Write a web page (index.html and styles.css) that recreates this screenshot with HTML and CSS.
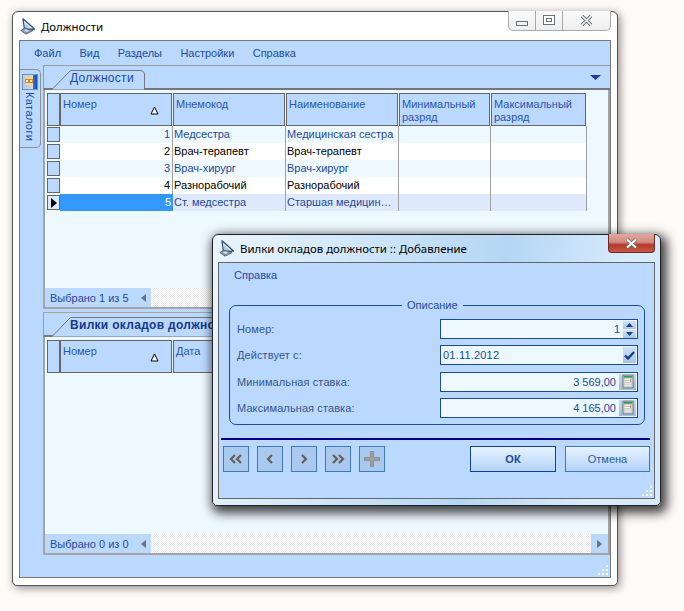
FILE: index.html
```html
<!DOCTYPE html>
<html lang="ru">
<head>
<meta charset="utf-8">
<title>Должности</title>
<link rel="stylesheet" href="styles.css">
</head>
<body>
<svg class="defs" width="0" height="0">
  <defs>
    <symbol id="ship" viewBox="0 0 16 17">
      <path d="M3 .8 L14.500 11 L4.500 11.500 Z" fill="#f4f8fd" stroke="#2a4f8f" stroke-width="1.300" stroke-linejoin="round"/>
      <path d="M4.500 4.500 L10 10 L5.300 10.300 Z" fill="#a9c9ea"/>
      <path d="M.8 12.500 L5 10 L13 12.500 L6 16.200 Z" fill="#8793a6" stroke="#4f5d75" stroke-width=".8"/>
      <path d="M3.500 12.500 L6 11.500 L9.500 12.800 L6.500 14 Z" fill="#d6dde8"/>
    </symbol>
    <symbol id="sort" viewBox="0 0 9 9">
      <path d="M4.500 1 L8 8 H1 Z" fill="#fff" stroke="#000" stroke-width="1"/>
    </symbol>
    <symbol id="calc" viewBox="0 0 14 17">
      <rect x="1" y="1" width="12" height="15" fill="#c8c8c4" stroke="#6d7a75"/>
      <rect x="2" y="2" width="10" height="2" fill="#2f9b55"/>
      <path d="M3 6h8M3 8.500h8M3 11h8M3 13.500h8" stroke="#f4f4f0" stroke-width="1.200"/>
      <path d="M10 6v3" stroke="#e08a6a" stroke-width="1.500"/>
    </symbol>
  </defs>
</svg>

<section class="window main-window">
  <header class="titlebar">
    <svg class="title-icon"><use href="#ship"/></svg>
    <span class="title-text">Должности</span>
    <div class="controls">
      <span class="ctl ctl-min"><i class="glyph-min"></i></span>
      <span class="ctl ctl-max"><i class="glyph-max"></i></span>
      <span class="ctl ctl-close">
        <svg width="13" height="11" viewBox="0 0 13 11"><path d="M2 1 L11 10 M11 1 L2 10" stroke="#5f6a72" stroke-width="3.400"/><path d="M2 1 L11 10 M11 1 L2 10" stroke="#f4f6f8" stroke-width="1.700"/></svg>
      </span>
    </div>
  </header>
  <div class="client">
    <nav class="menu">
      <span>Файл</span><span>Вид</span><span>Разделы</span><span>Настройки</span><span>Справка</span>
    </nav>
    <div class="work">
      <aside class="sidebar">
        <div class="side-tab">
          <svg class="side-icon" viewBox="0 0 16 16">
            <defs><linearGradient id="sg" x1="0" x2="1" y1="0" y2="0"><stop offset="0" stop-color="#a9c8ee"/><stop offset=".68" stop-color="#c9dcf4"/><stop offset=".72" stop-color="#2a76d8"/><stop offset="1" stop-color="#0c46b4"/></linearGradient></defs>
            <rect x=".5" y=".5" width="15" height="15" fill="url(#sg)" stroke="#7890ae"/>
            <rect x="3" y="3" width="8" height="8" fill="#f6d58a"/>
            <rect x="3.500" y="5.500" width="3" height="3" fill="#fff2d0" stroke="#e8801e"/>
            <rect x="7.500" y="5.500" width="3" height="3" fill="#fff2d0" stroke="#e8801e"/>
          </svg>
          <span class="side-text">Каталоги</span>
        </div>
      </aside>
      <div class="panels">
        <section class="panel panel-top">
          <div class="tabbar tabbar-top">
            <div class="tab">
              <svg class="tab-shape" width="96" height="20" viewBox="0 0 96 20"><path d="M0 19.500 H2 L20 1 Q20.500 .5 22 .5 H90 Q94.500 .5 94.500 5 V20 H0 Z" fill="#bbd9fe" stroke="#777" stroke-width="1"/></svg>
              <span class="tab-label">Должности</span>
            </div>
            <svg class="tab-menu" width="11" height="5" viewBox="0 0 11 5"><path d="M0 0H11L5.500 5Z" fill="#1b3f8f"/></svg>
          </div>
          <div class="pane">
            <div class="table">
              <div class="hcell hcell-ind"></div>
              <div class="hcell">Номер<svg class="sort"><use href="#sort"/></svg></div>
              <div class="hcell">Мнемокод</div>
              <div class="hcell">Наименование</div>
              <div class="hcell">Минимальный разряд</div>
              <div class="hcell">Максимальный разряд</div>

              <div class="ind-wrap"><i class="ind"></i></div><div class="cell num odd">1</div><div class="cell odd">Медсестра</div><div class="cell odd">Медицинская сестра</div><div class="cell odd"></div><div class="cell odd"></div>
              <div class="ind-wrap"><i class="ind"></i></div><div class="cell num even">2</div><div class="cell even">Врач-терапевт</div><div class="cell even">Врач-терапевт</div><div class="cell even"></div><div class="cell even"></div>
              <div class="ind-wrap"><i class="ind"></i></div><div class="cell num odd">3</div><div class="cell odd">Врач-хирург</div><div class="cell odd">Врач-хирург</div><div class="cell odd"></div><div class="cell odd"></div>
              <div class="ind-wrap"><i class="ind"></i></div><div class="cell num even">4</div><div class="cell even">Разнорабочий</div><div class="cell even">Разнорабочий</div><div class="cell even"></div><div class="cell even"></div>
              <div class="ind-wrap"><i class="ind ind-cur"><svg width="6" height="10" viewBox="0 0 6 10"><path d="M0 0L6 5L0 10Z" fill="#000"/></svg></i></div><div class="cell num cur">5</div><div class="cell sel">Ст. медсестра</div><div class="cell sel">Старшая медицин…</div><div class="cell sel"></div><div class="cell sel"></div>
            </div>
            <footer class="status">
              <div class="status-text">Выбрано 1 из 5<i class="arrow-left"></i></div>
              <div class="dither"></div>
            </footer>
          </div>
        </section>
        <div class="splitter"></div>
        <section class="panel panel-bottom">
          <div class="tabbar tabbar-low">
            <div class="tab tab-wide">
              <svg class="tab-shape" width="200" height="20" viewBox="0 0 200 20"><path d="M0 19.500 H2 L20 1 Q20.500 .5 22 .5 H200 V20 H0 Z" fill="#bbd9fe" stroke="#777" stroke-width="1"/></svg>
              <span class="tab-label tab-bold">Вилки окладов должности</span>
            </div>
          </div>
          <div class="pane pane-low">
            <div class="table table-low">
              <div class="hcell hcell-ind"></div>
              <div class="hcell">Номер<svg class="sort"><use href="#sort"/></svg></div>
              <div class="hcell">Дата</div>
            </div>
            <footer class="status">
              <div class="status-text">Выбрано 0 из 0<i class="arrow-left"></i></div>
              <div class="dither"></div>
              <div class="scroll-end"><i class="arrow-right"></i></div>
            </footer>
          </div>
        </section>
      </div>
    </div>
    <span class="grip"></span>
  </div>
</section>

<section class="window dialog">
  <header class="titlebar titlebar-dialog">
    <svg class="title-icon"><use href="#ship"/></svg>
    <span class="title-text">Вилки окладов должности :: Добавление</span>
    <span class="close-red">
      <svg width="15" height="11" viewBox="0 0 15 11"><path d="M3 1.500 L12 9.500 M12 1.500 L3 9.500" stroke="#6e6e6e" stroke-width="3.600"/><path d="M3 1.500 L12 9.500 M12 1.500 L3 9.500" stroke="#fff" stroke-width="2"/></svg>
    </span>
  </header>
  <div class="dialog-client">
    <div class="dialog-menu">Справка</div>
    <fieldset class="group">
      <legend>Описание</legend>
      <div class="form">
        <label>Номер:</label>
        <div class="field right">1
          <span class="spin">
            <span class="spin-btn"><svg width="7" height="4" viewBox="0 0 7 4"><path d="M0 4L3.500 0L7 4Z" fill="#1b3f8f"/></svg></span>
            <span class="spin-btn"><svg width="7" height="4" viewBox="0 0 7 4"><path d="M0 0L3.500 4L7 0Z" fill="#1b3f8f"/></svg></span>
          </span>
        </div>
        <label>Действует с:</label>
        <div class="field field-date">01.11.2012
          <span class="check-btn"><svg width="11" height="9" viewBox="0 0 11 9"><path d="M1 4.500L4 7.500L10 1" fill="none" stroke="#143e8e" stroke-width="2.400"/></svg></span>
        </div>
        <label>Минимальная ставка:</label>
        <div class="field right">3 569,00<span class="calc-btn"><svg width="12" height="15"><use href="#calc"/></svg></span></div>
        <label>Максимальная ставка:</label>
        <div class="field right">4 165,00<span class="calc-btn"><svg width="12" height="15"><use href="#calc"/></svg></span></div>
      </div>
    </fieldset>
    <div class="rule"></div>
    <div class="actions">
      <button class="nav-btn"><svg width="14" height="10" viewBox="0 0 14 10"><path d="M6 1L2 5L6 9M12 1L8 5L12 9" fill="none" stroke="#62605e" stroke-width="2.200"/></svg></button>
      <button class="nav-btn"><svg width="8" height="10" viewBox="0 0 8 10"><path d="M6 1L2 5L6 9" fill="none" stroke="#62605e" stroke-width="2.200"/></svg></button>
      <button class="nav-btn"><svg width="8" height="10" viewBox="0 0 8 10"><path d="M2 1L6 5L2 9" fill="none" stroke="#62605e" stroke-width="2.200"/></svg></button>
      <button class="nav-btn"><svg width="14" height="10" viewBox="0 0 14 10"><path d="M2 1L6 5L2 9M8 1L12 5L8 9" fill="none" stroke="#62605e" stroke-width="2.200"/></svg></button>
      <button class="nav-btn"><svg width="16" height="16" viewBox="0 0 16 16"><path d="M6 0H10V6H16V10H10V16H6V10H0V6H6Z" fill="#8f9295"/><path d="M8 1V15M1 8H15" stroke="#a9acae" stroke-width="1"/></svg></button>
      <button class="dlg-btn btn-ok">ОК</button>
      <button class="dlg-btn btn-cancel">Отмена</button>
    </div>
    <span class="grip"></span>
  </div>
</section>
</body>
</html>
```

FILE: styles.css
```css
* { box-sizing: border-box; }

html, body {
  margin: 0;
  height: 100%;
}

body {
  position: relative;
  width: 684px;
  height: 611px;
  overflow: hidden;
  background: #fefaf8;
  font-family: "Liberation Sans", "Noto Sans", sans-serif;
  font-size: 11px;
  color: #1e4a9e;
}

.defs { position: absolute; }

.window {
  position: absolute;
  display: flex;
  flex-direction: column;
  border: 1px solid #555;
  border-radius: 6px 6px 5px 5px;
}

.main-window {
  left: 12px;
  top: 11px;
  width: 606px;
  height: 575px;
  padding: 0 6px 7px;
  background: #fff;
  box-shadow: 2px 2px 9px rgba(0, 0, 0, .45);
}

.titlebar {
  position: relative;
  display: flex;
  align-items: center;
  flex: none;
  height: 28px;
  color: #000;
}

.title-icon {
  width: 16px;
  height: 17px;
  flex: none;
  margin: 0 5px 0 1px;
}

.title-text {
  font-family: "Noto Sans", sans-serif;
  font-size: 11.4px;
  color: #000;
}

.controls {
  position: absolute;
  right: 0;
  top: -1px;
  display: flex;
  height: 20px;
  border: 1px solid #a9a9a9;
  border-top: 0;
  border-radius: 0 0 5px 5px;
  background: linear-gradient(#fafafa, #eeeeee);
}

.ctl {
  display: flex;
  align-items: center;
  justify-content: center;
  height: 100%;
}

.ctl-min { width: 27px; border-right: 1px solid #a9a9a9; }
.ctl-max { width: 27px; border-right: 1px solid #a9a9a9; }
.ctl-close { width: 47px; }

.glyph-min {
  width: 12px;
  height: 5px;
  margin-top: 6px;
  border: 1px solid #6b7277;
  background: #f4f4f4;
}

.glyph-max {
  width: 12px;
  height: 10px;
  margin-top: -2px;
  border: 1px solid #6b7277;
  background: #fff;
  box-shadow: inset 0 0 0 2px #fff, inset 0 0 0 3px #6b7277;
}

.client {
  position: relative;
  flex: 1;
  display: flex;
  flex-direction: column;
  border: 1px solid #777;
  background: #bbd9fe;
}

.menu {
  display: flex;
  flex: none;
  align-items: center;
  gap: 18.4px;
  height: 24px;
  padding: 0 14px;
  font-size: 11px;
}

.work {
  display: flex;
  flex: 1;
  min-height: 0;
  padding-bottom: 22px;
}

.sidebar {
  flex: none;
  width: 23px;
  padding-top: 4px;
}

.side-tab {
  display: flex;
  flex-direction: column;
  align-items: center;
  width: 21px;
  height: 79px;
  padding-top: 4px;
  border: 1px solid #8c9097;
  border-left: 0;
  border-radius: 0 5px 5px 0;
  background: #bbd9fe;
}

.side-icon {
  width: 16px;
  height: 16px;
  flex: none;
}

.side-text {
  margin-top: 2px;
  writing-mode: vertical-rl;
  font-size: 11px;
  letter-spacing: .4px;
  line-height: 16px;
}

.panels {
  display: flex;
  flex: 1;
  flex-direction: column;
  min-width: 0;
}

.panel { display: flex; flex-direction: column; }
.panel-top { flex: none; height: 244px; }
.panel-bottom { flex: 1; min-height: 0; }

.tabbar {
  position: relative;
  flex: none;
  display: flex;
  align-items: flex-end;
  height: 24px;
  padding-left: 6px;
  border-top: 1px solid #9a9a9a;
  border-bottom: 2px solid #777;
  border-left: 1px solid #9a9a9a;
}

.tabbar-top { height: 25px; }

.tabbar-low {
  height: 24px;
  border-top: 0;
}

.tab {
  position: relative;
  width: 95px;
  height: 19px;
  margin-bottom: -1px;
  padding-left: 20px;
  font-size: 12px;
  line-height: 17px;
}

.tab-wide { width: 200px; }

.tab-shape {
  position: absolute;
  left: 0;
  top: 0;
}

.tab-label {
  position: relative;
  white-space: nowrap;
  letter-spacing: .3px;
}

.tab-bold {
  font-weight: 700;
  color: #17388a;
}

.tab-menu {
  position: absolute;
  right: 9px;
  bottom: 8px;
}

.pane {
  flex: 1;
  display: flex;
  flex-direction: column;
  min-height: 0;
  border-left: 2px solid #a4a4a4;
  border-right: 2px solid #a4a4a4;
  border-bottom: 2px solid #a4a4a4;
  background: #edf8ff;
}

.table {
  display: grid;
  grid-template-columns: 13px 113px 113px 113px 92px 96px;
  grid-template-rows: 33px repeat(5, 17px);
  flex: 1;
  align-content: start;
  padding: 3px 0 0 2px;
  line-height: 13px;
}

.table-low { grid-template-rows: 33px; }

.hcell {
  position: relative;
  margin-right: 1px;
  padding: 4px 2px 0;
  border: 1px solid #666;
  background: #bbd9fe;
  color: #2a55b5;
}

.hcell-ind { margin-right: 0; }

.sort {
  position: absolute;
  left: 89px;
  top: 12px;
  width: 9px;
  height: 9px;
}

.ind-wrap {
  padding: 1px 0;
  background: #edf8ff;
}

.ind {
  display: flex;
  align-items: center;
  justify-content: center;
  height: 15px;
  border: 1px solid #666;
  background: #bbd9fe;
}

.ind-cur { background: #dee9fe; }

.cell {
  overflow: hidden;
  padding: 0 2px 0 1px;
  border-right: 1px solid #a0a0a0;
  white-space: nowrap;
  line-height: 17px;
}

.num { text-align: right; }
.odd { background: #edf8ff; color: #1e4a9e; }
.even { background: #fff; color: #000; }
.sel { background: #dee9fe; color: #1e4a9e; }
.cur { background: #3399ff; color: #fff; border-right: 0; }

.status {
  display: flex;
  flex: none;
  height: 19px;
}

.status-text {
  display: flex;
  align-items: center;
  justify-content: space-between;
  flex: none;
  width: 106px;
  padding: 0 5px;
  background: #bbd9fe;
}

.dither {
  flex: 1;
  background-color: #fff;
  background-image: repeating-conic-gradient(#ececec 0 25%, #fff 0 50%);
  background-size: 2px 2px;
}

.scroll-end {
  display: flex;
  align-items: center;
  justify-content: center;
  flex: none;
  width: 17px;
  background: #bbd9fe;
}

.arrow-left,
.arrow-right {
  width: 0;
  height: 0;
  border-top: 4px solid transparent;
  border-bottom: 4px solid transparent;
}

.arrow-left { border-right: 5px solid #6d6f78; }
.arrow-right { border-left: 5px solid #6d6f78; }

.splitter {
  flex: none;
  height: 4px;
  border-bottom: 1px solid #a4a4a4;
}

.grip {
  position: absolute;
  right: 2px;
  bottom: 2px;
  width: 11px;
  height: 11px;
  background-image:
    radial-gradient(circle, #fff 1px, transparent 1.200px);
  background-size: 4px 4px;
  clip-path: polygon(100% 0, 100% 100%, 0 100%);
}

/* Dialog */
.dialog {
  left: 212px;
  top: 234px;
  width: 449px;
  height: 272px;
  padding: 0 5px 6px;
  border-color: #222;
  background: linear-gradient(100deg, #eaf5fe 0%, #cfe6fa 30%, #b4d6f5 60%, #d8ecfd 85%, #d5e9fb 100%);
  box-shadow: 3px 4px 11px 3px rgba(0, 0, 0, .75);
}

.titlebar-dialog { height: 27px; }

.close-red {
  position: absolute;
  right: 0;
  top: -1px;
  display: flex;
  align-items: center;
  justify-content: center;
  width: 47px;
  height: 19px;
  border: 1px solid #6d2a22;
  border-top: 0;
  border-radius: 0 0 4px 4px;
  background: linear-gradient(#dea79f 0%, #d58a7e 45%, #b5392a 60%, #c85a48 100%);
}

.dialog-client {
  position: relative;
  flex: 1;
  display: flex;
  flex-direction: column;
  padding: 0 4px 0 2px;
  border: 1px solid #666;
  background: #bbd9fe;
}

.dialog-menu {
  height: 24px;
  padding: 5px 0 0 13px;
  line-height: 14px;
}

.group {
  margin: 11px 5px 0 8px;
  padding: 0 6px 6px 7px;
  height: 127px;
  border: 1px solid #1b4b9b;
  border-radius: 7px;
}

.group legend {
  margin: 0 0 0 165px;
  padding: 0 5px;
  line-height: 14px;
}

.form {
  display: grid;
  grid-template-columns: 203px 198px;
  grid-auto-rows: 20px;
  row-gap: 6.33px;
  margin-top: 7px;
  align-items: center;
}

.form label { color: #34558f; letter-spacing: .1px; }

.field {
  display: flex;
  align-items: center;
  height: 20px;
  padding: 0 1px 0 2px;
  border: 1px solid #1b4b9b;
  background: #edf8ff;
  white-space: nowrap;
}

.field-date { letter-spacing: .2px; }

.right { justify-content: flex-end; }

.spin {
  display: flex;
  flex-direction: column;
  gap: 1px;
  margin-left: 3px;
}

.spin-btn {
  display: flex;
  align-items: center;
  justify-content: center;
  width: 13px;
  height: 8px;
  background: linear-gradient(#cfe2f7, #a9c6e6);
}

.check-btn {
  display: flex;
  align-items: center;
  justify-content: center;
  width: 13px;
  height: 16px;
  margin-left: auto;
  background: linear-gradient(#cfe2f7, #a9c6e6);
}

.calc-btn {
  display: flex;
  align-items: center;
  justify-content: center;
  width: 17px;
  height: 16px;
  margin-left: 3px;
  background: linear-gradient(#c4d9f0, #a3bedc);
}

.rule {
  height: 2px;
  margin: 13px 0 0 0;
  background: #00008b;
}

.actions {
  display: flex;
  gap: 8px;
  margin: 6px 0 0 2px;
}

.nav-btn {
  display: flex;
  align-items: center;
  justify-content: center;
  width: 26px;
  height: 26px;
  padding: 0;
  border: 1px solid #3f78b5;
  background: #aac9ee;
}

.dlg-btn {
  width: 86px;
  height: 26px;
  padding: 0;
  font: inherit;
  color: #1e4a9e;
  background: linear-gradient(#e6f3ff, #b4d3f7);
}

.btn-ok {
  margin-left: auto;
  margin-right: 1px;
  border: 1px solid #153f8f;
  font-weight: 700;
}

.btn-cancel {
  width: 85px;
  border: 1px solid #3f78b5;
  color: #2f5a9f;
}
```
